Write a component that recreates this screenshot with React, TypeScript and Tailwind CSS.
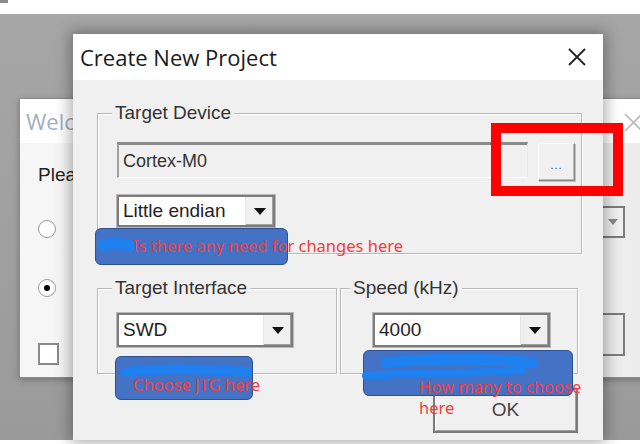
import React from "react";

const ctl = { fontFamily: '"Liberation Sans", Arial, sans-serif' };

function Combo({ w, h, text }: { w: number; h: number; text: string }) {
  return (
    <div
      className="flex border-2 border-[#7c7c7c] bg-white shadow-[0_0_0_1px_#b9b9b9]"
      style={{ width: w, height: h }}
    >
      <div className="flex flex-1 items-center pl-[4px] text-[19px] text-[#1e1e1e]" style={ctl}>
        {text}
      </div>
      <div className="flex w-[28px] items-center justify-center border-l border-[#e6e6e6] bg-[#f0f0f0] shadow-[inset_-1px_-1px_0_#a0a0a0]">
        <svg width="12" height="7" viewBox="0 0 12 7">
          <path d="M0 0 H12 L6 7 Z" fill="#111" />
        </svg>
      </div>
    </div>
  );
}

function Legend({ ml, children }: { ml: number; children: React.ReactNode }) {
  return (
    <div
      className="-mt-[12px] w-fit bg-[#f0f0f0] px-[3px] text-[19px] leading-[22px] text-[#333]"
      style={{ ...ctl, marginLeft: ml }}
    >
      {children}
    </div>
  );
}

export default function App() {
  return (
    <div className="relative h-[444px] w-[640px] overflow-hidden bg-white">
      {/* top strip */}
      <div className="h-[14px] bg-white">
        <div className="h-[3px] w-[8px] bg-[#8a8a8a]" />
      </div>
      {/* desktop */}
      <div className="absolute left-0 right-0 top-[14px] h-[426px] bg-[linear-gradient(180deg,#a6a6a6,#9a9a9a)]" />

      {/* Welcome dialog (behind) */}
      <div className="absolute left-[19px] top-[98px] flex h-[280px] w-[645px] flex-col border border-[#8c8c8c] bg-[#f0f0f0] shadow-[0_2px_6px_rgba(0,0,0,0.25)]">
        <div className="flex h-[44px] items-center justify-between bg-white pl-[6px] pr-[20px]">
          <div className="w-[50px] overflow-hidden">
            <span className="whitespace-nowrap text-[22px] text-[#a3afc4]" style={{ fontFamily: '"Open Sans", sans-serif' }}>
              Welcome
            </span>
          </div>
          <svg width="19" height="19" viewBox="0 0 19 19" className="mt-[2px]">
            <path d="M1 1 L18 18 M18 1 L1 18" stroke="#b8b8b8" strokeWidth="1.6" />
          </svg>
        </div>
        <div className="flex flex-1 bg-[linear-gradient(90deg,#f6f6f6,#ececec)]">
          <div className="flex w-[54px] flex-col overflow-hidden pl-[18px] pt-[20px]" style={ctl}>
            <div className="whitespace-nowrap text-[19px] leading-[24px] text-[#222]">Please</div>
            <div className="mt-[28px] flex items-center gap-[16px]">
              <div className="h-[18px] w-[18px] shrink-0 rounded-full border border-[#9a9a9a] bg-white" />
              <span className="text-[19px] text-[#333]">I</span>
            </div>
            <div className="mt-[30px] flex items-center gap-[16px]">
              <div className="flex h-[18px] w-[18px] shrink-0 items-center justify-center rounded-full border border-[#9a9a9a] bg-white">
                <div className="h-[6px] w-[6px] rounded-full bg-black" />
              </div>
              <span className="text-[19px] text-[#333]">I</span>
            </div>
            <div className="mt-[38px] flex items-center gap-[13px]">
              <div className="h-[22px] w-[21px] shrink-0 border-2 border-[#8a8a8a] bg-white" />
              <span className="text-[19px] text-[#333]">I</span>
            </div>
          </div>
          <div className="ml-auto mr-[38px] flex flex-col items-end pt-[63px]">
            <div className="flex h-[32px] w-[200px] border-2 border-[#7c7c7c] bg-white">
              <div className="flex-1" />
              <div className="flex w-[20px] items-center justify-center bg-[#f0f0f0]">
                <svg width="10" height="6" viewBox="0 0 10 6">
                  <path d="M0 0 H10 L5 6 Z" fill="#888" />
                </svg>
              </div>
            </div>
            <div className="mt-[75px] h-[43px] w-[120px] border-2 border-[#7c7c7c] bg-[#ececec]" />
          </div>
        </div>
      </div>

      {/* Create New Project dialog */}
      <div className="absolute left-[73px] top-[34px] flex h-[406px] w-[530px] flex-col bg-[#f0f0f0] shadow-[0_0_14px_3px_rgba(0,0,0,0.32)]">
        <div className="flex h-[46px] items-center justify-between bg-white pl-[7px] pr-[16px]">
          <span className="text-[22px] leading-none text-[#1a1a1a]" style={{ fontFamily: '"Open Sans", sans-serif' }}>
            Create New Project
          </span>
          <svg width="20" height="18" viewBox="0 0 20 18">
            <path d="M2 1 L18 17 M18 1 L2 17" stroke="#222" strokeWidth="1.8" />
          </svg>
        </div>
        <div className="flex flex-1 flex-col pl-[24px] pt-[33px]">
          {/* Target Device group */}
          <div className="h-[141px] w-[485px] border border-[#b8b8b8] shadow-[inset_1px_1px_0_#fff,1px_1px_0_#fff]">
            <Legend ml={14}>Target Device</Legend>
            <div className="ml-[19px] mt-[18px] flex items-start gap-[10px]">
              <div
                className="flex h-[36px] w-[411px] items-center border-l-2 border-t-[3px] border-b border-r border-l-[#a0a0a0] border-t-[#8a8a8a] border-b-white border-r-[#e8e8e8] bg-[#f0f0f0] pl-[4px] text-[18px] text-[#333]"
                style={ctl}
              >
                Cortex-M0
              </div>
              <div className="mt-[1px] flex h-[38px] w-[37px] items-end justify-center border border-l-white border-t-white border-r-[#8a8a8a] border-b-[#8a8a8a] bg-[#f0f0f0] pb-[9px] shadow-[1px_1px_0_#c0c0c0,inset_-1px_-1px_0_#b8b8b8]">
                <span className="text-[11px] leading-none tracking-[1px] text-[#444]" style={ctl}>
                  ...
                </span>
              </div>
            </div>
            <div className="ml-[19px] mt-[14px]">
              <Combo w={158} h={32} text="Little endian" />
            </div>
          </div>

          {/* Interface / Speed */}
          <div className="mt-[34px] flex gap-[3px]">
            <div className="h-[86px] w-[240px] border border-[#b8b8b8] shadow-[inset_1px_1px_0_#fff,1px_1px_0_#fff]">
              <Legend ml={14}>Target Interface</Legend>
              <div className="ml-[19px] mt-[14px]">
                <Combo w={176} h={34} text="SWD" />
              </div>
            </div>
            <div className="h-[86px] w-[238px] border border-[#b8b8b8] shadow-[inset_1px_1px_0_#fff,1px_1px_0_#fff]">
              <Legend ml={9}>Speed (kHz)</Legend>
              <div className="ml-[32px] mt-[14px]">
                <Combo w={177} h={34} text="4000" />
              </div>
            </div>
          </div>

          {/* OK */}
          <div className="ml-[336px] mt-[14px] flex h-[45px] w-[145px] items-center justify-center border-2 border-[#7a7a7a] bg-[#f0f0f0] shadow-[inset_1px_1px_0_#fff,inset_-1px_-1px_0_#a0a0a0]">
            <span className="text-[19px] text-[#444]" style={ctl}>
              OK
            </span>
          </div>
        </div>
      </div>

      {/* red highlight box */}
      <div className="absolute left-[491px] top-[123px] h-[73px] w-[132px] border-[10px] border-[#ff0000]" />

      {/* Annotation 1 */}
      <div className="absolute left-[95px] top-[228px] flex h-[37px] w-[193px] items-center rounded-[6px] border border-[#2f528f] bg-[#4472c4]">
        <svg className="absolute inset-0 overflow-visible" width="193" height="37">
          <path d="M8 16 C16 14, 28 15, 36 17" stroke="#1f80f0" strokeWidth="12" strokeLinecap="round" fill="none" />
        </svg>
        <span
          className="relative whitespace-nowrap pl-[37px] text-[16.5px] leading-none text-[#f43c3c]"
          style={{ fontFamily: '"Noto Sans", "Noto Sans CJK SC", sans-serif' }}
        >
          Is there any need for changes here
        </span>
      </div>

      {/* Annotation 2 */}
      <div className="absolute left-[115px] top-[356px] h-[44px] w-[138px] rounded-[6px] border border-[#2f528f] bg-[#4472c4]">
        <svg className="absolute inset-0 overflow-visible" width="138" height="44">
          <path d="M10 15 C45 11, 95 12, 130 15" stroke="#1f80f0" strokeWidth="10" strokeLinecap="round" fill="none" />
        </svg>
        <span
          className="relative block whitespace-nowrap pl-[17px] pt-[18px] text-[16.5px] leading-[20px] text-[#f43c3c]"
          style={{ fontFamily: '"Noto Sans", "Noto Sans CJK SC", sans-serif' }}
        >
          Choose JTG here
        </span>
      </div>

      {/* Annotation 3 */}
      <div className="absolute left-[363px] top-[350px] h-[46px] w-[210px] rounded-[6px] border border-[#2f528f] bg-[#4472c4]">
        <svg className="absolute inset-0 overflow-visible" width="210" height="46">
          <path d="M22 12 C70 6, 140 8, 168 12" stroke="#1f80f0" strokeWidth="11" strokeLinecap="round" fill="none" />
          <path d="M2 25 C50 21, 120 23, 158 19" stroke="#1f80f0" strokeWidth="8" strokeLinecap="round" fill="none" />
        </svg>
        <span
          className="relative block whitespace-nowrap pl-[55px] pt-[25px] text-[16.5px] leading-[21px] text-[#f43c3c]"
          style={{ fontFamily: '"Noto Sans", "Noto Sans CJK SC", sans-serif' }}
        >
          How many to choose
          <br />
          here
        </span>
      </div>
    </div>
  );
}
